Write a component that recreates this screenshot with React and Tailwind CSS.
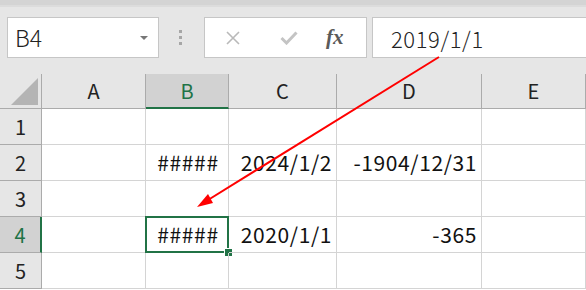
const font = { fontFamily: '"Noto Sans CJK JP", "Noto Sans", sans-serif' }

const cols = ['A', 'B', 'C', 'D', 'E']
const rows = [
  { n: 1, cells: ['', '', '', '', ''] },
  { n: 2, cells: ['', '#####', '2024/1/2', '-1904/12/31', ''] },
  { n: 3, cells: ['', '', '', '', ''] },
  { n: 4, cells: ['', '#####', '2020/1/1', '-365', ''] },
  { n: 5, cells: ['', '', '', '', ''] },
]

function Toolbar() {
  return (
    <div className="h-[74px] bg-[#e6e6e6] flex flex-col">
      <div className="h-[5px] bg-[#d4d4d4]" />
      <div className="h-[2px] bg-[#dcdcdc]" />
      <div className="flex items-center mt-[10px] h-[41px]">
        <div className="ml-[7px] w-[152px] h-full bg-white border border-[#c6c6c6] flex items-center justify-between pl-[7px] pr-[10px]">
          <span className="text-[23px] text-[#222] leading-none font-light">B4</span>
          <span className="w-0 h-0 border-l-[4px] border-r-[4px] border-t-[4px] border-l-transparent border-r-transparent border-t-[#777]" />
        </div>
        <div className="ml-[20px] flex flex-col gap-[3px]">
          <span className="w-[3px] h-[3px] bg-[#a6a6a6]" />
          <span className="w-[3px] h-[3px] bg-[#a6a6a6]" />
          <span className="w-[3px] h-[3px] bg-[#a6a6a6]" />
        </div>
        <div className="ml-[22px] w-[163px] h-full bg-white border border-[#c6c6c6] flex items-center">
          <svg width="16" height="16" viewBox="0 0 16 16" className="ml-[20px]">
            <path d="M2 2 L14 14 M14 2 L2 14" stroke="#b9b9b9" strokeWidth="1.6" fill="none" />
          </svg>
          <svg width="18" height="14" viewBox="0 0 18 14" className="ml-[39px]">
            <path d="M1.5 7 L6.5 12 L16.5 1.5" stroke="#c4c4c4" strokeWidth="3" fill="none" />
          </svg>
          <span className="ml-[28px] text-[21px] italic font-bold text-[#5a5a5a] leading-none" style={{ fontFamily: '"Liberation Serif", serif' }}>
            fx
          </span>
        </div>
        <div className="ml-[5px] flex-1 h-full bg-white border border-[#c6c6c6] border-r-0 flex items-center pl-[18px]">
          <span className="text-[22px] text-[#222] leading-none tracking-[0.6px] font-light">2019/1/1</span>
        </div>
      </div>
    </div>
  )
}

function Grid() {
  return (
    <div className="grid grid-cols-[42px_104px_83px_108px_145px_104px] grid-rows-[35px_36px_36px_36px_36px_36px] bg-white">
      <div className="bg-[#e6e6e6] border-r border-b border-[#ababab] flex items-end justify-end pr-[3px] pb-[3px]">
        <div className="w-[27px] h-[27px] bg-[#b4b4b4] [clip-path:polygon(100%_0,100%_100%,0_100%)]" />
      </div>
      {cols.map((c) => (
        <div
          key={c}
          className={
            c === 'B'
              ? 'bg-[#d2d2d2] border-r border-[#ababab] border-b-2 border-b-[#217346] flex items-center justify-center text-[20px] text-[#217346]'
              : 'bg-[#e6e6e6] border-r border-b border-[#ababab] flex items-center justify-center text-[20px] text-[#222]'
          }
        >
          {c}
        </div>
      ))}
      {rows.map((r) => [
        <div
          key={'h' + r.n}
          className={
            r.n === 4
              ? 'bg-[#d2d2d2] border-r-2 border-r-[#217346] border-b border-[#ababab] flex items-center justify-center text-[20px] text-[#217346]'
              : 'bg-[#e6e6e6] border-r border-b border-[#ababab] flex items-center justify-center text-[20px] text-[#222]'
          }
        >
          {r.n}
        </div>,
        ...r.cells.map((v, i) => {
          const selected = r.n === 4 && i === 1
          return (
            <div
              key={r.n + '-' + i}
              className={
                'relative border-r border-b border-[#d4d4d4] flex items-center text-[21px] text-[#111] whitespace-nowrap tracking-[0.6px] ' +
                (v === '#####' ? 'justify-center pl-[2px]' : 'justify-end pr-[4px]')
              }
            >
              {v}
              {selected && (
                <>
                  <div className="absolute -left-[1px] -top-[1px] -right-[1px] -bottom-[1px] border-2 border-[#217346]" />
                  <div className="absolute -right-[5px] -bottom-[5px] w-[7px] h-[7px] bg-[#217346] border border-white box-content" />
                </>
              )}
            </div>
          )
        }),
      ])}
    </div>
  )
}

export default function App() {
  return (
    <div className="relative w-[586px] h-[290px] overflow-hidden bg-white" style={font}>
      <Toolbar />
      <Grid />
      <svg className="absolute left-0 top-0 pointer-events-none" width="586" height="290">
        <line x1="439" y1="57" x2="208" y2="200" stroke="#ff0000" strokeWidth="2" />
        <polygon points="197,207 213,203 208,194" fill="#ff0000" />
      </svg>
    </div>
  )
}
